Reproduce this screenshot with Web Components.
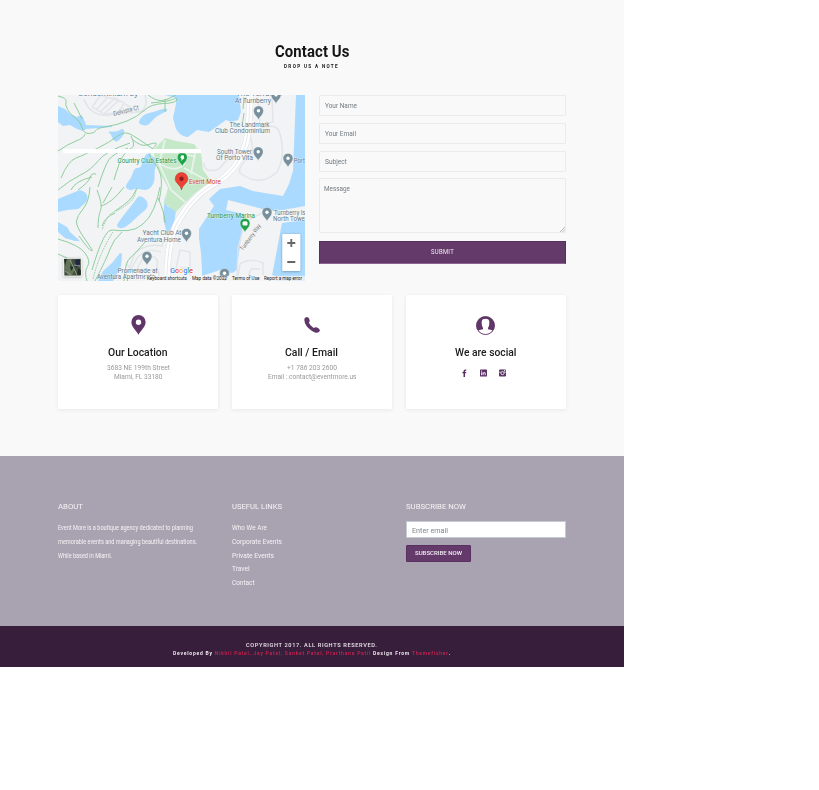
<!DOCTYPE html>
<html lang="en">
<head>
<meta charset="utf-8">
<title>Contact Us</title>
<style>
body{margin:0;background:#fff;font-family:Roboto,"Liberation Sans",sans-serif}
</style>
</head>
<body>
<contact-page></contact-page>
<script>
const define=(name,html,setup)=>customElements.define(name,class extends HTMLElement{
  connectedCallback(){
    if(this.shadowRoot)return;
    const t=document.createElement('template');t.innerHTML=html;
    this.attachShadow({mode:'open'}).append(t.content.cloneNode(true));
    if(setup)setup(this,this.shadowRoot);
  }
});

// One line of text condensed or widened to a fixed measure.
define('fit-line',`<style>:host{display:block;white-space:nowrap;flex:none}
span{display:inline-block;transform-origin:0 50%}</style><span><slot></slot></span>`,(h,r)=>{
  h.style.width=h.getAttribute('w')+'px';
  const s=r.querySelector('span');
  s.style.transform='scaleX('+(h.getAttribute('w')/s.getBoundingClientRect().width)+')';
});

define('section-title',`<style>:host{display:flex;flex-direction:column;align-items:center;padding-top:41px;height:54px;color:#151515}
.a{font-size:16px;font-weight:700;line-height:22px;letter-spacing:.1px}.b{font-size:4.8px;font-weight:700;line-height:7px;letter-spacing:1.4px}</style>
<fit-line class="a" w="74.5">Contact Us</fit-line><fit-line class="b" w="55">DROP US A NOTE</fit-line>`);

// Rounds each polyline by running quadratic curves through segment midpoints.
const smooth=d=>d.split('M').filter(Boolean).map(s=>{
  const closed=s.includes('Z'),p=s.replace('Z','').split('L').map(q=>q.trim().split(' ').map(Number));
  const mid=(a,b)=>[(a[0]+b[0])/2,(a[1]+b[1])/2];
  if(closed){const n=p.length;let o='M'+mid(p[n-1],p[0]);p.forEach((q,i)=>o+='Q'+q+' '+mid(q,p[(i+1)%n]));return o+'Z';}
  let o='M'+p[0];for(let i=1;i<p.length-1;i++)o+='Q'+p[i]+' '+(i===p.length-2?p[i+1]:mid(p[i],p[i+1]));
  return p.length===2?o+'L'+p[1]:o;
}).join('');
const pin=(x,y,c='#78909c')=>`<g transform="translate(${x} ${y})"><path d="M0 7.2C-.7 4.4-4.9 2.6-4.9-1.7A4.9 4.9 0 0 1 4.9-1.7C4.9 2.6.7 4.4 0 7.2Z" fill="${c}" stroke="#fff" stroke-width=".3"/><circle cy="-1.7" r="1.7" fill="#fff"/></g>`;
const lab=(x,y,w,t,c='#5f7989',s=7,e='')=>`<text x="${x}" y="${y}" textLength="${w}" lengthAdjust="spacingAndGlyphs" fill="${c}" font-size="${s}" ${e}>${t}</text>`;

define('area-map',`<style>:host{display:block;width:247px;height:186px}svg{display:block}
text{font-family:Roboto,sans-serif;font-weight:400}.l{paint-order:stroke;stroke:#fff;stroke-opacity:.6;stroke-width:.8px;stroke-linejoin:round}</style>
<svg width="247" height="186" viewBox="58 95 247 186">
<defs><filter id="sh" x="-20%" y="-20%" width="140%" height="150%"><feDropShadow dx="0" dy=".6" stdDeviation=".8" flood-opacity=".35"/></filter></defs>
<rect x="58" y="95" width="247" height="186" fill="#f1f3f4"/>
<g fill="#aadaff">
<path d="M58 106L65 109L70 114L77 117L81 115L83 117L86 125L112 126V127L86 129L83 131L77 129L70 125L63 126L58 122Z"/>
<path d="${smooth('M107 131L117 132L123 128L125 133L118 142L113 141L112 135Z')}"/>
<path d="${smooth('M138 122L144 114L154 112L165 108L169 110L155 117L148 126L141 125Z')}"/>
<path d="M165 95L176 98V104L173 118L176 129Q181 137 188 137L197 130L209 132L219 125L226 120L231 122L238 120L241 112L239 95Z"/>
<path d="${smooth('M143 159L148 152L152 156L158 161L154 170L155 182L148 191L135 188L131 191L124 187L132 177L134 168L141 168Z')}"/>
<path d="M58 199L70 194L80 190Q87 192 87.500 197T78 209L67 210L58 212Z"/>
<path d="${smooth('M117 224L127 211L135 201L139 195L147 200L148 208L140 214L130 224L122 229L117 227Z')}"/>
<path d="M58 222L67 227L70 232L80 241L75 241L65 238L58 232Z"/>
<path d="M98 281L103 271L112 263L120 253L122 254L121 266L113 281Z"/>
<path d="M165 196L167 206L176 210L174 225L167 234L163 218Z"/>
<path d="M296 95H305V281H202V270L201 253L199 238V229L214 206L209 199L220 189L240 186L253 191L283 196L289 184L293 171Z"/>
</g>
<path d="M228 200L270 211L283 210L305 206V220L282 223L272 276H236L244 214L226 210Z" fill="#f1f3f4"/>
<path d="M202 276L220 270L232 273L240 268L275 276V281H202Z" fill="#f1f3f4"/>
<path d="M165 138L176 141L194 144L201 153L203 170L211 181L195 193L176 212L164 203L168 188L161 175L155 160L153 150Z" fill="#c5e8c8"/>
<g fill="none" stroke="#e9f3ec" stroke-width="1.8"><path d="M165 140L159 164L171 190L185 202M160 164Q177 174 185 163M184 168L206 180M174 151L196 157M196 148L191 174"/></g>
<g fill="none" stroke="#e1e4e8" stroke-width="1.400">
<path d="M92 107L101 95M96 110L107 98M100 112L113 100M104 114L119 100M92 107L104 114L119 113L124 103L113 97M100 95L120 101"/>
<path d="M125 104L139 112Q149 108 145 95M84 99Q90 117 110 115T145 111"/>
<path d="M258 99L260 125L273 122L272 95M251 133Q277 119 280 134Q286 157 277 172Q260 188 240 173Q237 167 253 153L251 137M204 163Q204 174 219 169Q231 153 242 151"/>
<path d="M126 276L135 253Q146 243 162 246L165 237M129 272L138 257Q148 247 161 252M136 271L143 258Q160 253 157 266L160 278M126 264L135 271L158 270"/>
<path d="M176 269L180 250L190 252V279M180 268H190M238 277L240 264Q250 257 263 263V275M247 280L251 269H260M237 278L238 248L245 222L262 213"/>
</g>
<g fill="none" stroke-linejoin="round"><path d="M250 95Q249 140 244 148Q239 167 219 181Q195 193 180 218Q167 236 167 281" stroke="#d9dde2" stroke-width="6.6"/><path d="M250 95Q249 140 244 148Q239 167 219 181Q195 193 180 218Q167 236 167 281" stroke="#fff" stroke-width="5.8"/><path d="M250 95Q249 140 244 148Q239 167 219 181Q195 193 180 218Q167 236 167 281" stroke="#dadfe4" stroke-width=".7"/></g>
<g fill="none" stroke="#84ca94" stroke-width=".9">
<path d="${smooth('M58 96L67 98L65 105L70 114L80 121L84 134L95 133L97 128L117 125L137 117L151 104L176 103L177 97L171 101L151 103M74 103L82 119M148 95L156 101L167 100L176 95M165 99L165 112M58 151L68 144L84 138L85 134M61 178L68 161L84 155L110 142L124 131L136 137L153 149M58 190L70 180L91 170L106 151L130 143M71 190L75 181L92 177M78 190L89 182L91 173L96 174M98 187L105 165L113 154L128 148M131 136L136 146L127 150L119 162L114 180M132 139L141 147L153 143L158 143L147 155L158 166L163 183L159 201')}"/>
<path d="${smooth('M90 187L89 202L77 216L76 226L91 248L93 251L89 250L79 236M97 190L103 205L98 216L98 228M124 187L112 203L101 206M112 187L103 203M160 187L158 198L150 218L136 230L120 231L104 229L92 270M102 226L105 217L115 213M115 211L124 205L133 197L137 188M158 198L165 213L165 223M122 232L113 240L107 258L95 281M58 239L79 245L91 261L84 272L87 281M58 254L67 258M124 281L125 262L135 254L145 242M243 109L244 97M242 126L244 113')}"/>
<path d="${smooth('M136 190L135 199L119 210L107 215L102 230M113 232L99 254L93 279')}" stroke-dasharray="1.6 1"/>
</g>
<g class="l">
${lab(78,95.8,60,'Condominium by')}${lab(236,96,46,'The Terraces')}${lab(235,102.5,36,'At Turnberry')}
${lab(229.5,127,40,'The Landmark')}${lab(215,133.2,55,'Club Condominium')}
${lab(217,154,35,'South Tower')}${lab(216,160.3,37,'Of Porto Vita')}${lab(293.8,163,11,'Port')}
${lab(274,214.5,36,'Turnberry Isle')}${lab(273,221,34,'North Tower')}
${lab(142.5,235,39,'Yacht Club At')}${lab(137,241.5,44,'Aventura Home')}
${lab(117.5,272.5,40,'Promenade at')}${lab(97,278.9,58,'Aventura Apartments')}
${lab(117.5,162.8,59,'Country Club Estates','#22944c')}${lab(207,217.5,48,'Turnberry Marina','#22944c')}
${lab(189,183.5,32,'Event More','#d33b35')}
${lab(114,116,26,'Delvista Ct','#6d757c',6.5,'transform="rotate(-15 114 116)"')}
${lab(243,251,31,'Turnberry Way','#6d757c',6.2,'transform="rotate(-54 243 251)"')}
</g>
${pin(276,96.5)}${pin(258.5,112.5)}${pin(258.2,153.5)}${pin(288,160)}${pin(267,214)}${pin(186.5,235)}${pin(147,258)}${pin(224.5,275)}
${pin(182.3,159,'#1fa04a')}${pin(245,225,'#1fa04a')}
<path d="M181 155.5H184L183 158H184.5L181 161L182 158Z" fill="#fff"/><path d="M243 222H247V225H243Z" fill="#fff" stroke="#fff" stroke-width="1"/>
<path d="M181.5 190C180.5 184.5 175.2 183.3 175.2 178.8A6.3 6.3 0 0 1 187.8 178.8C187.8 183.3 182.5 184.5 181.5 190Z" fill="#ea4335" stroke="#c5221f" stroke-width=".5"/><circle cx="181.5" cy="178.8" r="2.2" fill="#8c1d18"/>
<rect x="63" y="149" width="138" height="4.2" fill="#fff"/>
<g filter="url(#sh)"><rect x="282.3" y="234" width="18" height="37" rx="1" fill="#fff"/></g>
<path d="M287.3 243H295.3M291.3 239V247M287.3 262H295.3" stroke="#666" stroke-width="1.8"/>
<g filter="url(#sh)"><rect x="63.5" y="258" width="18" height="18.3" rx="1" fill="#fff"/></g>
<rect x="64.3" y="258.8" width="16.5" height="16.8" fill="#46513e"/>
<path d="M66 259H72L70 265L75 269L72 275H68L65 268Z" fill="#64765a"/><path d="M75 260L80 259V264L76 268Z" fill="#1d2744"/><path d="M64 259H67L65 265ZM70 266L74 267L71 271ZM78 268L80.8 270V275H77Z" fill="#202d26"/><path d="M74 265L80 266M70 260L77 275M65 271L71 275" stroke="#a1aba3" stroke-width=".8"/>
<text x="170" y="272.8" font-size="7.5" textLength="23" style="font-weight:500;paint-order:stroke;stroke:#fff;stroke-width:1px"><tspan fill="#4285f4">G</tspan><tspan fill="#ea4335">o</tspan><tspan fill="#f9ab00">o</tspan><tspan fill="#4285f4">g</tspan><tspan fill="#34a853">l</tspan><tspan fill="#ea4335">e</tspan></text>
<rect x="145" y="275.8" width="160" height="5.2" fill="#f5f5f5" opacity=".75"/>
${lab(147,280.2,40,'Keyboard shortcuts','#222',4.8)}${lab(192,280.2,35,'Map data ©2022','#222',4.8)}${lab(232,280.2,27.5,'Terms of Use','#222',4.8)}${lab(264,280.2,38,'Report a map error','#222',4.8)}
</svg>`);

define('text-field',`<style>:host{display:block;box-sizing:border-box;height:21px;border:1px solid #ebebeb;border-radius:1px;padding:0 5px;color:#737b82;font-size:6.9px;line-height:20.5px;background:#f9f9f9;position:relative}
:host([area]){height:55px;padding-left:4px;line-height:20px}
svg{display:none;position:absolute;right:0;bottom:0}:host([area]) svg{display:block}</style><slot></slot>
<svg width="5" height="5" viewBox="0 0 5 5"><path d="M0 5L5 0M2.5 5L5 2.5" stroke="#999" stroke-width=".7"/></svg>`);

define('contact-form',`<style>:host{display:flex;flex-direction:column;gap:6.8px;width:247px}
button{box-sizing:border-box;height:23px;margin:.8px 0 0;padding:0;border:1px solid #563060;border-bottom-color:#8a6590;background:#643a6b;color:#eee;display:flex;align-items:center;justify-content:center;font:400 6.3px Roboto,sans-serif;letter-spacing:.3px}</style>
<text-field><fit-line w="32">Your Name</fit-line></text-field>
<text-field><fit-line w="31">Your Email</fit-line></text-field>
<text-field><fit-line w="22">Subject</fit-line></text-field>
<text-field area><fit-line w="26">Message</fit-line></text-field>
<button><fit-line w="23">SUBMIT</fit-line></button>`);

define('info-card',`<style>:host{display:flex;flex-direction:column;align-items:center;box-sizing:border-box;width:160px;height:114px;padding-top:18px;background:#fff;box-shadow:0 1px 4px rgba(0,0,0,.07);border-radius:1px;color:#999;font-size:6.8px;line-height:9.7px}
.i{height:23.5px;display:flex;align-items:center}.h{box-sizing:border-box;height:26.8px;padding-top:5.5px;display:flex;align-items:center;color:#1b1b1b;font-size:11.2px;font-weight:500}</style>
<div class="i"><slot name="icon"></slot></div><div class="h"><slot name="title"></slot></div><slot></slot>`);

define('social-icons',`<style>:host{display:flex;gap:12px;padding:5.7px 4px 0 0}svg{display:block}</style>
<svg width="7" height="8" viewBox="0 0 7 8"><path d="M2.5 8V4.3H1.4V3H2.5V2Q2.5 .4 4.2 .4H5.3V1.7H4.5Q4 1.7 4 2.2V3H5.3L5.1 4.3H4V8Z" fill="#5a3163"/></svg>
<svg width="7" height="8" viewBox="0 0 7 8"><rect y=".5" width="7" height="7" rx=".5" fill="#5a3163"/><path d="M1.6 3.2V6.2M3.1 6.2V3.3M3.2 4.4Q4.1 3 5.2 3.8V6.2" stroke="#fff" stroke-width=".9" fill="none"/><rect x="1.1" y="1.6" width="1" height="1" fill="#fff"/></svg>
<svg width="7" height="8" viewBox="0 0 7 8"><rect y=".5" width="7" height="7" rx="1" fill="#5a3163"/><path d="M0 3.2H2M5 3.2H7" stroke="#fff" stroke-width=".6"/><circle cx="3.5" cy="4.1" r="1.6" fill="none" stroke="#fff" stroke-width=".8"/><rect x="5" y="1.2" width="1.1" height="1.1" fill="#fff"/></svg>`);

define('info-cards',`<style>:host{display:flex;justify-content:space-between;padding-top:14.4px}svg{display:block}</style>
<info-card><svg slot="icon" width="15" height="20" viewBox="0 0 15 20"><path fill-rule="evenodd" d="M7.5 0A7.1 7.1 0 0 1 14.6 7.1C14.6 12 10 15.5 7.5 19.8C5 15.5 .4 12 .4 7.1A7.1 7.1 0 0 1 7.5 0ZM7.5 4.5A2.7 2.7 0 1 0 7.5 9.9A2.7 2.7 0 0 0 7.5 4.5Z" fill="#603669"/></svg>
<fit-line slot="title" w="59.5">Our Location</fit-line><fit-line w="63">3683 NE 199th Street</fit-line><fit-line w="48.5">Miami, FL 33180</fit-line></info-card>
<info-card><svg slot="icon" width="16" height="16" viewBox="0 0 16 16"><path d="M1 .7L3 .1Q4.8 .2 5.7 3.2Q5.9 4.7 4.8 5.5Q5.9 8.6 9.6 11Q12 9.8 14 10.9Q16 12 15.9 13.7Q14.9 16 11.8 15.7Q6.8 14.4 2.5 9Q-.9 3.4 1 .7Z" fill="#603669"/></svg>
<fit-line slot="title" w="53">Call / Email</fit-line><fit-line w="50">+1 786 203 2600</fit-line><fit-line w="88.5">Email : contact@eventmore.us</fit-line></info-card>
<info-card><svg slot="icon" width="19" height="19" viewBox="0 0 19 19"><circle cx="9.5" cy="9.5" r="9.3" fill="#603669"/><path d="M2.2 14.5Q4.6 13.7 7 13.2Q7.3 12 6.4 10.7Q5.4 8.6 5.8 5.1Q6.3 2.8 9.5 2.8T13.2 5.1Q13.6 8.6 12.6 10.7Q11.7 12 12 13.2Q14.4 13.7 16.8 14.5A9 9 0 0 1 2.2 14.5Z" fill="#fff"/><circle cx="9.5" cy="9.5" r="9" fill="none" stroke="#603669" stroke-width=".7"/></svg>
<fit-line slot="title" w="61.5">We are social</fit-line><social-icons></social-icons></info-card>`);

define('footer-column',`<style>:host{display:block;width:160px;color:#f5f3f6;font-size:6.3px;line-height:13.75px}
.h{font-size:7.5px;line-height:12.5px;padding-bottom:var(--gap,9px)}</style><div class="h"><slot name="title"></slot></div><slot></slot>`);

define('site-footer',`<style>:host{display:flex;justify-content:space-between;box-sizing:border-box;height:170.4px;padding:45px 58.5px 0 58px;background:#a9a3b1}
.e{box-sizing:border-box;height:17.5px;width:160px;background:#fff;border:.5px solid #c5cbd2;padding-left:5px;font-size:7.2px;line-height:17.5px;color:#7b858e}
button{display:flex;align-items:center;justify-content:center;box-sizing:border-box;width:65.5px;height:16.5px;padding:0 2px 0 0;margin:7px 0 0;border:1px solid #593061;background:#643a6b;border-radius:1px;color:#f3eef4;font:500 5.7px Roboto,sans-serif}</style>
<footer-column><fit-line slot="title" w="25">ABOUT</fit-line>
<fit-line w="135">Event More is a boutique agency dedicated to planning</fit-line><fit-line w="139">memorable events and managing beautiful destinations.</fit-line><fit-line w="54">While based in Miami.</fit-line></footer-column>
<footer-column><fit-line slot="title" w="50">USEFUL LINKS</fit-line>
<fit-line w="35">Who We Are</fit-line><fit-line w="50">Corporate Events</fit-line><fit-line w="42">Private Events</fit-line><fit-line w="17.5">Travel</fit-line><fit-line w="22.5">Contact</fit-line></footer-column>
<footer-column style="--gap:7.5px"><fit-line slot="title" w="60">SUBSCRIBE NOW</fit-line>
<div class="e"><fit-line w="36">Enter email</fit-line></div><button><fit-line w="47">SUBSCRIBE NOW</fit-line></button></footer-column>`);

define('copyright-bar',`<style>:host{display:flex;flex-direction:column;align-items:center;box-sizing:border-box;height:41px;padding-top:16px;background:#371e3b;color:#eee6ef;font-size:5.6px;line-height:7.6px;font-weight:500;letter-spacing:.6px}
.d{font-size:5.3px;font-weight:700;letter-spacing:.8px}i{font-style:normal;font-weight:500;color:#d5204f}</style>
<fit-line w="131.5">COPYRIGHT 2017. ALL RIGHTS RESERVED.</fit-line>
<fit-line class="d" w="278">Developed By <i>Nikhil Patel, Jay Patel, Sanket Patel, Prarthana Patil</i> Design From <i>Themefisher</i>.</fit-line>`);

define('contact-page',`<style>:host{display:block;width:624px}main{box-sizing:border-box;height:455.6px;background:#f9f9f9;padding:0 58.5px 0 58px}
.row{display:flex;justify-content:space-between;height:186px}</style>
<main><section-title></section-title><div class="row"><area-map></area-map><contact-form></contact-form></div><info-cards></info-cards></main>
<site-footer></site-footer><copyright-bar></copyright-bar>`);
</script>
</body>
</html>
